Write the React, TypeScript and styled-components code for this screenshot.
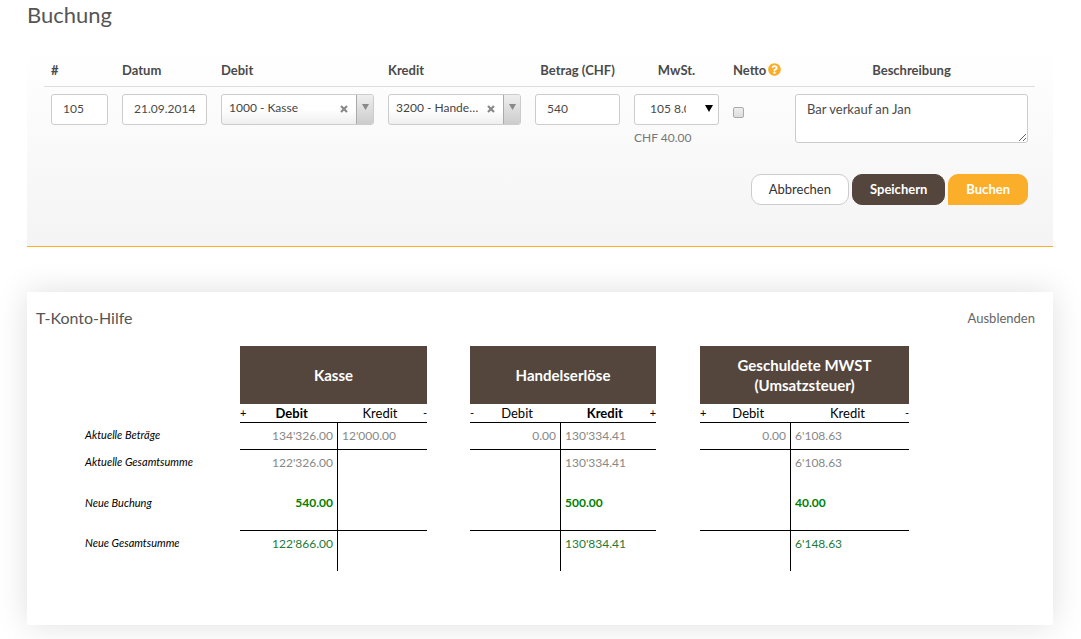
import React from "react";
import styled, { createGlobalStyle, css } from "styled-components";
import { FaQuestionCircle } from "react-icons/fa";

const GlobalStyle = createGlobalStyle`
  *, *::before, *::after { box-sizing: border-box; }
  body {
    margin: 0;
    background: #fff;
    color: #4a4a4a;
    font: 13px/20px Lato, "Liberation Sans", sans-serif;
  }
  button, input, select, textarea { font: inherit; color: inherit; }
`;

const Page = styled.main`
  padding: 0 28px 14px 27px;
`;

const Title = styled.h1`
  margin: 0;
  padding-top: 1px;
  font-size: 22px;
  line-height: 28px;
  font-weight: 400;
  color: #555;
`;

const EntryForm = styled.form`
  margin-top: 19px;
  padding: 8px 18px 41px 17px;
  border-bottom: 1px solid #fbae29;
  background: linear-gradient(#fff, #f4f4f4) no-repeat padding-box;
`;

const EntryTable = styled.table`
  width: 100%;
  table-layout: fixed;
  border-collapse: separate;
  border-spacing: 0;
`;

const Col = styled.col<{ $w?: number }>`
  width: ${(p) => (p.$w ? `${p.$w}px` : "auto")};
`;

const FieldHead = styled.th<{ $center?: boolean }>`
  height: 31px;
  padding: 0 7px 2px;
  border-bottom: 1px solid #ddd;
  font-weight: 700;
  text-align: ${(p) => (p.$center ? "center" : "left")};
  white-space: nowrap;
`;

const FieldCell = styled.td`
  height: 87px;
  padding: 7px 7px 0;
  vertical-align: top;
`;

const HelpButton = styled.button`
  margin: 0 0 0 2px;
  padding: 0;
  border: 0;
  background: none;
  color: #fbae29;
  font-size: 13px;
  line-height: 13px;
  vertical-align: middle;
  cursor: pointer;
  svg { display: block; margin-bottom: 4px; }
`;

const boxed = css`
  display: block;
  width: 100%;
  border: 1px solid #ccc;
  border-radius: 3px;
  background: #fff;
`;

const TextInput = styled.input`
  ${boxed}
  height: 31px;
  padding: 0 0 2px 11px;
  font-size: 12px;
`;

const NoteArea = styled.textarea`
  ${boxed}
  height: 49px;
  padding: 4px 11px;
  resize: both;
`;

const TaxWrap = styled.div`
  ${boxed}
  display: flex;
  align-items: center;
  height: 31px;
  padding: 0 5px 2px 15px;
  color: #000;
`;

const TaxSelect = styled.select`
  flex: 1;
  min-width: 0;
  margin-right: 19px;
  padding: 0;
  border: 0;
  background: none;
  color: #4a4a4a;
  font-size: 12px;
  appearance: none;
  text-overflow: clip;
`;

const TaxAmount = styled.div`
  padding-top: 3px;
  color: #777;
  font-size: 12px;
  white-space: nowrap;
`;

const Combo = styled.div`
  ${boxed}
  display: flex;
  height: 31px;
  overflow: hidden;
  background: linear-gradient(#fff 50%, #eee);
  color: #888;
`;

const ComboSelect = styled.select`
  flex: 1;
  min-width: 0;
  padding: 0 0 3px 7px;
  border: 0;
  background: none;
  color: #444;
  font-size: 12px;
  appearance: none;
  text-overflow: ellipsis;
  overflow: hidden;
`;

const ClearButton = styled.button`
  display: flex;
  align-items: center;
  justify-content: center;
  width: 24px;
  padding: 0 0 2px;
  border: 0;
  background: none;
  cursor: pointer;
`;

const ComboArrow = styled.span`
  display: flex;
  justify-content: center;
  width: 17px;
  padding-top: 9px;
  border-left: 1px solid #aaa;
  background: linear-gradient(#eee, #ccc);
`;

const NetCheck = styled.input`
  display: block;
  width: 11px;
  height: 11px;
  margin: 13px 0 0;
  border: 1px solid #aaa;
  border-radius: 2px;
  background: linear-gradient(#eee, #ddd);
  appearance: none;
`;

const Actions = styled.div`
  display: flex;
  justify-content: flex-end;
  gap: 3px;
  padding-right: 7px;
`;

const ActionButton = styled.button<{ $tone: "plain" | "dark" | "accent" }>`
  height: 31px;
  padding: 0 17px 2px;
  border: 1px solid;
  border-radius: 10px;
  cursor: pointer;
  ${(p) =>
    p.$tone === "plain" &&
    css`background: #fff; border-color: #ccc; color: #333;`}
  ${(p) =>
    p.$tone === "dark" &&
    css`background: #54463d; border-color: #54463d; color: #fff; font-weight: 700;`}
  ${(p) =>
    p.$tone === "accent" &&
    css`
      background: #fbae29;
      border-color: #fbae29;
      border-bottom-left-radius: 0;
      color: #fff;
      font-weight: 700;
    `}
`;

const HelpCard = styled.section`
  margin-top: 45px;
  padding: 16px 18px 54px 9px;
  background: #fff;
  box-shadow: 0 0 30px rgba(0, 0, 0, 0.13);
`;

const CardHead = styled.header`
  display: flex;
  justify-content: space-between;
  align-items: center;
  padding-bottom: 18px;
`;

const CardTitle = styled.h2`
  margin: 0;
  font-size: 16px;
  line-height: 20px;
  font-weight: 400;
  color: #555;
`;

const HideLink = styled.a`
  color: #666;
  text-decoration: none;
`;

const Accounts = styled.table`
  margin-left: 49px;
  table-layout: fixed;
  width: 824px;
  border-collapse: separate;
  border-spacing: 0;
  color: #000;
  th, td { padding: 0; vertical-align: top; }
`;

const AccountName = styled.th`
  && { vertical-align: middle; }
  height: 58px;
  background: #54463d;
  color: #fff;
  font-size: 15px;
  line-height: 20px;
`;

const SideHead = styled.th<{ $strong: boolean }>`
  height: 19px;
  border-bottom: 1px solid #000;
  font-weight: ${(p) => (p.$strong ? 700 : 400)};
`;

const SideInner = styled.span`
  display: flex;
  line-height: 18px;
`;

const SideName = styled.span`
  flex: 1;
  text-align: center;
`;

const Sign = styled.span`
  font-size: 11px;
  font-weight: 400;
`;

type Tone = "past" | "entry" | "total";

const RowLabel = styled.th`
  font-size: 11px;
  line-height: 24px;
  font-style: italic;
  font-weight: 400;
  text-align: left;
`;

const Row = styled.tr<{ $h: number; $tone: Tone }>`
  height: ${(p) => p.$h}px;
  td { padding: ${(p) => (p.$tone === "entry" ? "14px 4px 0" : "1px 4px 0")}; line-height: 24px; }
  ${RowLabel} { padding-top: ${(p) => (p.$tone === "entry" ? 14 : 0)}px; }
`;

const Amount = styled.td<{ $side: "debit" | "credit"; $tone: Tone; $ruled: boolean }>`
  text-align: ${(p) => (p.$side === "debit" ? "right" : "left")};
  font-size: 12px;
  color: ${(p) => (p.$tone === "past" ? "#888" : p.$tone === "entry" ? "#008000" : "#1c7a3a")};
  font-weight: ${(p) => (p.$tone === "entry" ? 700 : 400)};
  ${(p) => p.$side === "credit" && "border-left: 1px solid #000;"}
  ${(p) => p.$ruled && "border-bottom: 1px solid #000;"}
`;

type Account = {
  name: string;
  signs: [string, string];
  strong: "debit" | "credit" | null;
  values: [string, string][];
};

const accounts: Account[] = [
  {
    name: "Kasse",
    signs: ["+", "-"],
    strong: "debit",
    values: [["134'326.00", "12'000.00"], ["122'326.00", ""], ["540.00", ""], ["122'866.00", ""]],
  },
  {
    name: "Handelserlöse",
    signs: ["-", "+"],
    strong: "credit",
    values: [["0.00", "130'334.41"], ["", "130'334.41"], ["", "500.00"], ["", "130'834.41"]],
  },
  {
    name: "Geschuldete MWST (Umsatzsteuer)",
    signs: ["+", "-"],
    strong: null,
    values: [["0.00", "6'108.63"], ["", "6'108.63"], ["", "40.00"], ["", "6'148.63"]],
  },
];

const rows: { label: string; height: number; tone: Tone; ruled: boolean }[] = [
  { label: "Aktuelle Beträge", height: 27, tone: "past", ruled: true },
  { label: "Aktuelle Gesamtsumme", height: 27, tone: "past", ruled: false },
  { label: "Neue Buchung", height: 54, tone: "entry", ruled: true },
  { label: "Neue Gesamtsumme", height: 40, tone: "total", ruled: false },
];

const Triangle = ({ size, height }: { size: number; height: number }) => (
  <svg width={size} height={height} viewBox="0 0 8 7" preserveAspectRatio="none" aria-hidden="true">
    <path d="M0 0h8L4 7z" fill="currentColor" />
  </svg>
);

function AccountCombo({ id, value }: { id: string; value: string }) {
  return (
    <Combo>
      <ComboSelect id={id} defaultValue={value}>
        <option>{value}</option>
      </ComboSelect>
      <ClearButton type="button" aria-label="Auswahl löschen">
        <svg width="8" height="8" viewBox="0 0 8 8" aria-hidden="true">
          <path d="M1 1l6 6M7 1L1 7" stroke="currentColor" strokeWidth="2.2" />
        </svg>
      </ClearButton>
      <ComboArrow>
        <Triangle size={7} height={6} />
      </ComboArrow>
    </Combo>
  );
}

export default function App() {
  return (
    <>
      <GlobalStyle />
      <Page>
        <Title>Buchung</Title>
        <EntryForm onSubmit={(e) => e.preventDefault()}>
          <EntryTable>
            <colgroup>
              <Col $w={71} />
              <Col $w={99} />
              <Col $w={167} />
              <Col $w={147} />
              <Col $w={99} />
              <Col $w={99} />
              <Col $w={62} />
              <Col />
            </colgroup>
            <thead>
              <tr>
                <FieldHead><label htmlFor="nr">#</label></FieldHead>
                <FieldHead><label htmlFor="datum">Datum</label></FieldHead>
                <FieldHead><label htmlFor="debit">Debit</label></FieldHead>
                <FieldHead><label htmlFor="kredit">Kredit</label></FieldHead>
                <FieldHead $center><label htmlFor="betrag">Betrag (CHF)</label></FieldHead>
                <FieldHead $center><label htmlFor="mwst">MwSt.</label></FieldHead>
                <FieldHead>
                  <label htmlFor="netto">Netto</label>
                  <HelpButton type="button" aria-label="Hilfe"><FaQuestionCircle /></HelpButton>
                </FieldHead>
                <FieldHead $center><label htmlFor="text">Beschreibung</label></FieldHead>
              </tr>
            </thead>
            <tbody>
              <tr>
                <FieldCell><TextInput id="nr" defaultValue="105" /></FieldCell>
                <FieldCell><TextInput id="datum" defaultValue="21.09.2014" /></FieldCell>
                <FieldCell><AccountCombo id="debit" value="1000 - Kasse" /></FieldCell>
                <FieldCell><AccountCombo id="kredit" value="3200 - Handelserlöse" /></FieldCell>
                <FieldCell><TextInput id="betrag" defaultValue="540" /></FieldCell>
                <FieldCell>
                  <TaxWrap>
                    <TaxSelect id="mwst"><option>105 8.0%</option></TaxSelect>
                    <Triangle size={8} height={7} />
                  </TaxWrap>
                  <TaxAmount>CHF 40.00</TaxAmount>
                </FieldCell>
                <FieldCell><NetCheck id="netto" type="checkbox" /></FieldCell>
                <FieldCell><NoteArea id="text" defaultValue="Bar verkauf an Jan" /></FieldCell>
              </tr>
            </tbody>
          </EntryTable>
          <Actions>
            <ActionButton type="button" $tone="plain">Abbrechen</ActionButton>
            <ActionButton type="button" $tone="dark">Speichern</ActionButton>
            <ActionButton type="submit" $tone="accent">Buchen</ActionButton>
          </Actions>
        </EntryForm>

        <HelpCard>
          <CardHead>
            <CardTitle>T-Konto-Hilfe</CardTitle>
            <HideLink href="#">Ausblenden</HideLink>
          </CardHead>
          <Accounts>
            <colgroup>
              <Col $w={155} />
              <Col $w={97} />
              <Col $w={90} />
              <Col $w={43} />
              <Col $w={90} />
              <Col $w={96} />
              <Col $w={44} />
              <Col $w={90} />
              <Col $w={119} />
            </colgroup>
            <thead>
              <tr>
                <td />
                {accounts.map((a, i) => (
                  <React.Fragment key={a.name}>
                    {i > 0 && <td />}
                    <AccountName colSpan={2}>
                      {a.name.split(" (").map((part, n) => (n ? <div key={n}>({part}</div> : <div key={n}>{part}</div>))}
                    </AccountName>
                  </React.Fragment>
                ))}
              </tr>
              <tr>
                <td />
                {accounts.map((a, i) => (
                  <React.Fragment key={a.name}>
                    {i > 0 && <td />}
                    <SideHead $strong={a.strong === "debit"}>
                      <SideInner><Sign>{a.signs[0]}</Sign><SideName>Debit</SideName></SideInner>
                    </SideHead>
                    <SideHead $strong={a.strong === "credit"}>
                      <SideInner><SideName>Kredit</SideName><Sign>{a.signs[1]}</Sign></SideInner>
                    </SideHead>
                  </React.Fragment>
                ))}
              </tr>
            </thead>
            <tbody>
              {rows.map((r, n) => (
                <Row key={r.label} $h={r.height} $tone={r.tone}>
                  <RowLabel scope="row">{r.label}</RowLabel>
                  {accounts.map((a, i) => (
                    <React.Fragment key={a.name}>
                      {i > 0 && <td />}
                      <Amount $side="debit" $tone={r.tone} $ruled={r.ruled}>{a.values[n][0]}</Amount>
                      <Amount $side="credit" $tone={r.tone} $ruled={r.ruled}>{a.values[n][1]}</Amount>
                    </React.Fragment>
                  ))}
                </Row>
              ))}
            </tbody>
          </Accounts>
        </HelpCard>
      </Page>
    </>
  );
}
